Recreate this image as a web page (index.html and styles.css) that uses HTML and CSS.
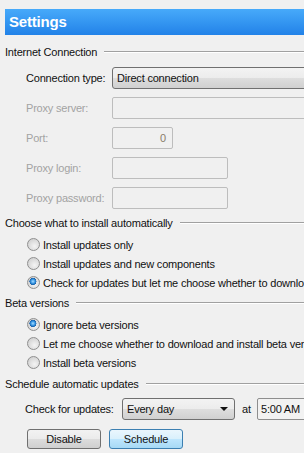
FILE: index.html
```html
<!DOCTYPE html>
<html lang="en">
<head>
<meta charset="UTF-8">
<meta name="viewport" content="width=device-width, initial-scale=1.0">
<title>Settings</title>
<link rel="stylesheet" href="styles.css">
</head>
<body>
<div class="panel">
    <div class="title-bar">Settings</div>

    <div class="group-title"><span>Internet Connection</span></div>
    <div class="fields">
        <div class="field-row">
            <div class="field-label">Connection type:</div>
            <div class="combo combo-wide">Direct connection</div>
        </div>
        <div class="field-row">
            <div class="field-label disabled">Proxy server:</div>
            <div class="text-box box-wide"></div>
        </div>
        <div class="field-row">
            <div class="field-label disabled">Port:</div>
            <div class="text-box box-port">0</div>
        </div>
        <div class="field-row">
            <div class="field-label disabled">Proxy login:</div>
            <div class="text-box box-mid"></div>
        </div>
        <div class="field-row">
            <div class="field-label disabled">Proxy password:</div>
            <div class="text-box box-mid"></div>
        </div>
    </div>

    <div class="group-title group-gap"><span>Choose what to install automatically</span></div>
    <div class="radios">
        <div class="radio-row"><span class="radio"></span>Install updates only</div>
        <div class="radio-row"><span class="radio"></span>Install updates and new components</div>
        <div class="radio-row"><span class="radio checked"></span>Check for updates but let me choose whether to download and install them</div>
    </div>

    <div class="group-title beta-gap"><span>Beta versions</span></div>
    <div class="radios">
        <div class="radio-row"><span class="radio checked"></span>Ignore beta versions</div>
        <div class="radio-row"><span class="radio"></span>Let me choose whether to download and install beta versions</div>
        <div class="radio-row"><span class="radio"></span>Install beta versions</div>
    </div>

    <div class="group-title schedule-gap"><span>Schedule automatic updates</span></div>
    <div class="schedule-row">
        <div class="schedule-label">Check for updates:</div>
        <div class="combo combo-period">Every day<span class="arrow"></span></div>
        <div class="at-label">at</div>
        <div class="time-box">5:00 AM</div>
    </div>
    <div class="buttons">
        <button class="btn">Disable</button>
        <button class="btn btn-focus">Schedule</button>
    </div>
</div>
</body>
</html>
```

FILE: styles.css
```css
body {
    margin: 0;
    background-color: #f0f0f0;
    font-family: "Liberation Sans", Arial, sans-serif;
    font-size: 11px;
    letter-spacing: -0.2px;
    color: #111;
    overflow: hidden;
}

.panel {
    padding: 9px 0 0 5px;
    width: 299px;
    overflow: hidden;
}

.title-bar {
    height: 26px;
    line-height: 26px;
    padding-left: 4px;
    background: linear-gradient(#47aafa, #2282e8);
    color: #fff;
    font-weight: bold;
    font-size: 15px;
    letter-spacing: -0.2px;
}

.group-title {
    display: flex;
    align-items: center;
    height: 14px;
    margin-top: 10px;
    white-space: nowrap;
}

.group-title::after {
    content: "";
    flex: 1;
    margin-left: 7px;
    border-top: 1px solid #a0a0a0;
    border-bottom: 1px solid #fff;
}

.group-gap {
    margin-top: 7px;
}

.beta-gap {
    margin-top: 4px;
}

.schedule-gap {
    margin-top: 5px;
}

.fields {
    margin-top: 8px;
    padding-left: 21px;
    display: flex;
    flex-direction: column;
    gap: 8px;
}

.field-row {
    display: flex;
    align-items: center;
    height: 22px;
}

.field-label {
    width: 86px;
    flex-shrink: 0;
}

.disabled {
    color: #a3a3a3;
}

.combo {
    position: relative;
    box-sizing: border-box;
    height: 22px;
    line-height: 20px;
    padding-left: 4px;
    border: 1px solid #707070;
    border-radius: 3px;
    background: linear-gradient(#f3f3f3 0%, #ececec 50%, #dedede 50%, #d0d0d0 100%);
    white-space: nowrap;
    flex-shrink: 0;
}

.combo-wide {
    width: 220px;
}

.text-box {
    box-sizing: border-box;
    height: 22px;
    line-height: 20px;
    border: 1px solid #bdbdbd;
    border-radius: 2px;
    background-color: #f0f0f0;
    flex-shrink: 0;
}

.box-wide {
    width: 220px;
}

.box-port {
    width: 61px;
    text-align: right;
    padding-right: 6px;
    color: #8a7c6a;
}

.box-mid {
    width: 116px;
}

.radios {
    margin-top: 5px;
    padding-left: 22px;
}

.radio-row {
    display: flex;
    align-items: center;
    height: 19px;
    white-space: nowrap;
}

.radio {
    box-sizing: border-box;
    width: 13px;
    height: 13px;
    margin-right: 3px;
    border-radius: 50%;
    border: 1px solid #8f8f8f;
    background: radial-gradient(circle at 60% 65%, #f4f4f4 0%, #dcdcdc 55%, #c8c8c8 100%);
    flex-shrink: 0;
}

.radio.checked {
    background:
        radial-gradient(circle at 45% 40%, #a9ddff 0%, #3b9ae6 22%, #175fa8 38%, transparent 41%),
        radial-gradient(circle at 60% 65%, #f4f4f4 0%, #dcdcdc 55%, #c8c8c8 100%);
}

.schedule-row {
    display: flex;
    align-items: center;
    margin-top: 7px;
    padding-left: 20px;
    height: 22px;
}

.schedule-label {
    width: 97px;
    flex-shrink: 0;
}

.combo-period {
    width: 113px;
}

.arrow {
    position: absolute;
    right: 6px;
    top: 8px;
    width: 0;
    height: 0;
    border-left: 4px solid transparent;
    border-right: 4px solid transparent;
    border-top: 4px solid #111;
}

.at-label {
    margin-left: 7px;
    width: 15px;
    flex-shrink: 0;
}

.time-box {
    box-sizing: border-box;
    height: 22px;
    line-height: 20px;
    width: 80px;
    padding-left: 3px;
    border: 1px solid #8e8e8e;
    border-radius: 2px;
    background-color: #f2f2f2;
    flex-shrink: 0;
}

.buttons {
    display: flex;
    gap: 8px;
    margin-top: 9px;
    padding-left: 22px;
}

.btn {
    box-sizing: border-box;
    width: 74px;
    height: 20px;
    padding: 0;
    font-family: "Liberation Sans", Arial, sans-serif;
    font-size: 11px;
    letter-spacing: -0.2px;
    color: #111;
    border: 1px solid #707070;
    border-radius: 3px;
    background: linear-gradient(#f2f2f2 0%, #ebebeb 50%, #dddddd 50%, #cfcfcf 100%);
}

.btn-focus {
    border-color: #3c7fb1;
    background: linear-gradient(#eaf6fd 0%, #d9f0fc 50%, #bee6fd 50%, #a7d9f5 100%);
}
```
